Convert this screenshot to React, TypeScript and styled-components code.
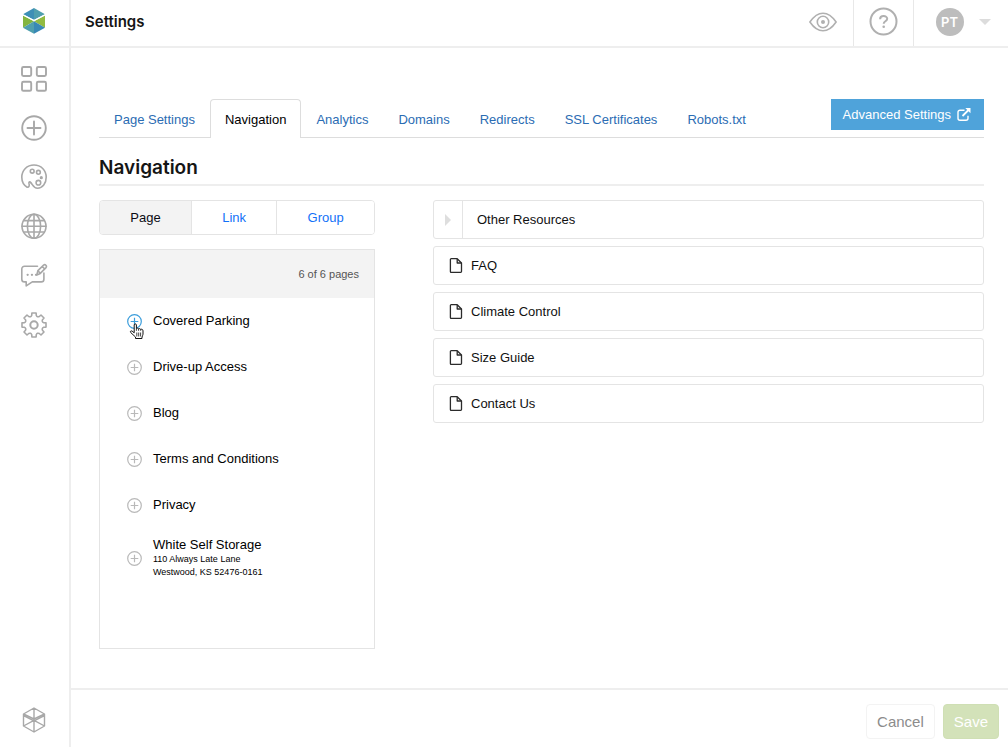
import React from "react";
import styled, { createGlobalStyle, css } from "styled-components";

const line = "#eeeeee";
const iconGrey = "#a8a8a8";
const display = 'Inter, "Open Sans", sans-serif';
const sans = '"Liberation Sans", Arial, Helvetica, sans-serif';

const GlobalStyle = createGlobalStyle`
  *, *::before, *::after { box-sizing: border-box; }
  body { margin: 0; background: #fff; color: #000; font: 13px/16px ${sans}; }
  button { font: inherit; color: inherit; background: none; border: 0; padding: 0; cursor: pointer; }
  a { text-decoration: none; }
  ul { list-style: none; margin: 0; padding: 0; }
  svg { display: block; }
`;

const Shell = styled.div`
  display: grid;
  grid-template-columns: 71px minmax(0, 1fr);
  min-height: 100vh;
`;

const Sidebar = styled.aside`
  display: flex;
  flex-direction: column;
  align-items: center;
  justify-content: space-between;
  border-right: 2px solid ${line};
  padding-bottom: 14px;
`;

const SideTop = styled.div`
  align-self: stretch;
  display: flex;
  flex-direction: column;
`;

const LogoLink = styled.a`
  display: flex;
  justify-content: center;
  height: 48px;
  padding-top: 8px;
  padding-right: 2px;
  border-bottom: 2px solid ${line};
`;

const SideNav = styled.nav`
  display: flex;
  flex-direction: column;
  align-items: center;
  gap: 21px;
  padding-top: 17px;
  padding-right: 1px;
`;

const SideLink = styled.a`
  display: block;
  color: ${iconGrey};
`;

const SideFoot = styled.div`
  padding-right: 2px;
`;

const Page = styled.div`
  display: flex;
  flex-direction: column;
  min-width: 0;
`;

const Header = styled.header`
  display: flex;
  align-items: stretch;
  height: 48px;
  border-bottom: 2px solid ${line};
`;

const Title = styled.h1`
  flex: 1;
  margin: 0;
  padding: 12px 14px 0;
  font: 600 15px/20px ${display};
  color: #151515;
`;

const HeaderCell = styled.div<{ $wide?: boolean }>`
  display: flex;
  align-items: center;
  justify-content: center;
  width: ${(p) => (p.$wide ? "95px" : "60px")};
  padding-bottom: 2px;
  color: #b0b0b0;
  & + & { border-left: 1px solid #e8e8e8; }
`;

const UserButton = styled.button`
  display: flex;
  align-items: center;
  gap: 15px;
  padding-left: 4px;
`;

const Avatar = styled.span`
  display: grid;
  place-items: center;
  width: 28px;
  height: 28px;
  border-radius: 50%;
  background: #bdbdbd;
  color: #fff;
  font: 600 13px/16px ${display};
`;

const Main = styled.main`
  flex: 1;
  padding: 51px 24px 39px 28px;
`;

const TabBar = styled.div`
  display: flex;
  justify-content: space-between;
  align-items: flex-start;
  height: 39px;
  border-bottom: 1px solid #ddd;
`;

const Tabs = styled.nav`
  display: flex;
`;

const Tab = styled.a<{ $active?: boolean }>`
  height: 39px;
  padding: 12px 14px 0;
  border: 1px solid transparent;
  border-bottom: 0;
  border-radius: 4px 4px 0 0;
  white-space: nowrap;
  color: #2b6cb3;
  ${(p) =>
    p.$active &&
    css`
      color: #000;
      background: #fff;
      border-color: #ddd;
    `}
`;

const AdvancedLink = styled.a`
  display: flex;
  align-items: center;
  gap: 6px;
  height: 31px;
  padding: 0 13px 0 12px;
  white-space: nowrap;
  background: #4fa3da;
  color: #fff;
`;

const SectionTitle = styled.h2`
  margin: 0;
  padding: 18px 0 4px;
  border-bottom: 2px solid ${line};
  font: 600 19px/24px ${display};
  color: #151515;
`;

const Columns = styled.div`
  display: grid;
  grid-template-columns: 276px minmax(0, 1fr);
  gap: 58px;
  align-items: start;
  padding-top: 14px;
`;

const Segments = styled.div`
  display: flex;
  height: 35px;
  margin-bottom: 14px;
  border: 1px solid #e4e4e4;
  border-radius: 4px;
  overflow: hidden;
`;

const Segment = styled.button<{ $active?: boolean }>`
  flex: 1 1 auto;
  color: ${(p) => (p.$active ? "#0b0b14" : "#1271f8")};
  background: ${(p) => (p.$active ? "#f3f3f3" : "#fff")};
  & + & { border-left: 1px solid #e4e4e4; }
`;

const Panel = styled.section`
  min-height: 400px;
  border: 1px solid #e4e4e4;
`;

const PanelHead = styled.div`
  display: flex;
  align-items: center;
  justify-content: flex-end;
  height: 48px;
  padding: 0 15px;
  background: #f3f3f3;
  color: #555;
  font-size: 11px;
`;

const PageRow = styled.li<{ $tall?: boolean }>`
  display: flex;
  align-items: center;
  gap: 11px;
  height: ${(p) => (p.$tall ? "60px" : "46px")};
  padding-left: 27px;
`;

const AddButton = styled.button<{ $hot?: boolean }>`
  position: relative;
  color: ${(p) => (p.$hot ? "#3b9ddb" : "#b9b9b9")};
`;

const Pointer = styled.svg`
  position: absolute;
  left: 2px;
  top: 9px;
`;

const Address = styled.span`
  display: block;
  font-size: 9px;
  line-height: 13px;
`;

const MenuList = styled.ul`
  display: grid;
  gap: 7px;
`;

const MenuItem = styled.li`
  display: flex;
  align-items: center;
  height: 39px;
  border: 1px solid #e4e4e4;
  border-radius: 3px;
  color: #111;
`;

const Expand = styled.button`
  display: grid;
  place-items: center;
  align-self: stretch;
  width: 29px;
  margin-right: 14px;
  border-right: 1px solid #e4e4e4;
  color: #dedede;
`;

const FileMark = styled.span`
  padding: 0 8px 0 15px;
`;

const Footer = styled.footer`
  display: flex;
  justify-content: flex-end;
  gap: 8px;
  height: 59px;
  padding: 14px 9px 0;
  border-top: 2px solid ${line};
`;

const FormButton = styled.button<{ $primary?: boolean }>`
  height: 35px;
  padding: 0 10px;
  border: 1px solid ${(p) => (p.$primary ? "#cfdfb4" : "#f3f3f3")};
  border-radius: 4px;
  background: ${(p) => (p.$primary ? "#d3e2b9" : "#fff")};
  color: ${(p) => (p.$primary ? "#fff" : "#8c8c8c")};
  font-size: 15px;
`;

const SideIcon = ({ children }: { children: React.ReactNode }) => (
  <svg width="28" height="28" viewBox="0 0 28 28" fill="none" stroke="currentColor" strokeWidth="1.6" strokeLinejoin="round" strokeLinecap="round" aria-hidden="true">
    {children}
  </svg>
);

const teeth = Array.from({ length: 8 }, (_, i) => {
  const at = (deg: number, r: number) => {
    const a = ((deg + i * 45 - 90) * Math.PI) / 180;
    return `${(14 + r * Math.cos(a)).toFixed(2)} ${(14 + r * Math.sin(a)).toFixed(2)}`;
  };
  return `${i ? "L" : "M"}${at(-10, 12.2)} L${at(10, 12.2)} L${at(13, 10)} Q${at(22.5, 8.2)} ${at(32, 10)}`;
}).join(" ");

const sideItems = [
  {
    label: "Dashboard",
    icon: (
      <g strokeWidth="1.9">
        <rect x="2" y="2" width="9.2" height="9" rx="1.4" />
        <rect x="16.8" y="2" width="9.2" height="9" rx="1.4" />
        <rect x="2" y="16.8" width="9.2" height="9" rx="1.4" />
        <rect x="16.8" y="16.8" width="9.2" height="9" rx="1.4" />
      </g>
    ),
  },
  {
    label: "Add",
    icon: (
      <g strokeWidth="1.9">
        <circle cx="14" cy="14" r="11.8" />
        <path d="M14 7.5v13M7.5 14h13" />
      </g>
    ),
  },
  {
    label: "Design",
    icon: (
      <>
        <path d="M7.2 24.2C3.5 22 1.8 18.3 1.8 14.2 1.8 7.3 7 2 14 2s12.2 5.3 12.2 12.2c0 6.2-3.7 11-8.7 11-4.5 0-4.8-4.3-7.4-6.200-.9-.5-1.400.4-1.100 1.500.6 2 .2 3.800-1.800 3.700z" />
        <circle cx="12.2" cy="8.2" r="1.9" />
        <circle cx="18.4" cy="9.3" r="1.9" />
        <circle cx="21.3" cy="14.7" r=".8" fill="currentColor" />
        <circle cx="18.4" cy="19.7" r="2.3" />
      </>
    ),
  },
  {
    label: "Sites",
    icon: (
      <>
        <circle cx="14" cy="14.3" r="12" />
        <ellipse cx="14" cy="14.3" rx="6.6" ry="12" />
        <path d="M14 2.3v24M2 14.3h24M4 8.600h20M4 20h20" />
      </>
    ),
  },
  {
    label: "Messages",
    icon: (
      <>
        <path d="M17.5 5.200H4.500a2.700 2.700 0 0 0-2.700 2.700v10.300a2.700 2.700 0 0 0 2.700 2.700h1.700v4l6.100-4h8.900a2.700 2.700 0 0 0 2.700-2.700v-6.200" />
        <path d="M16.800 13.900l1.100-4.300 5.700-5.500c1.600-1.200 3.700.8 2.400 2.500l-5.700 5.800zM17.900 9.600l2.400 2.800M22.200 5.500l2.500 2.500" />
        <path d="M7.600 13.800h.1M11.900 13.800h.1M16 13.800h.1" strokeWidth="2.200" />
      </>
    ),
  },
  {
    label: "Settings",
    icon: (
      <g transform="translate(0 1)">
        <path d={`${teeth} Z`} />
        <circle cx="14" cy="14" r="3.7" strokeWidth="2" />
      </g>
    ),
  },
];

const Logo = () => (
  <svg width="22" height="26" viewBox="0 0 22 26" role="img" aria-label="Home">
    <path d="M11 0v12L0 6.3z" fill="#3d8fb6" />
    <path d="M11 0v12l11-5.7z" fill="#4f9fae" />
    <path d="M0 7.600l11 5.600L0 19.700z" fill="#83b53f" />
    <path d="M22 7.600l-11 5.600 11 6.500z" fill="#92bb42" />
    <path d="M11 13.200v12.600L0 19.700z" fill="#4f9fae" />
    <path d="M11 13.200v12.600l11-6.100z" fill="#3989b5" />
    <path d="M0 6.800l11 5.700 11-5.700" fill="none" stroke="#fff" strokeWidth="1.200" />
  </svg>
);

const CubeOutline = () => (
  <svg width="24" height="26" viewBox="0 0 24 26" fill="none" stroke={iconGrey} strokeWidth="1.4" strokeLinejoin="round" aria-hidden="true">
    <path d="M12 1l10.500 6v12L12 25 1.500 19V7zM12 1v11.800M12 14v11M1.500 7L12 12l10.500-5M1.500 8.700L12 13.800l10.500-5.100M1.500 19L12 13.300 22.500 19" />
  </svg>
);

const Eye = () => (
  <svg width="28" height="20" viewBox="0 0 28 20" fill="none" stroke="currentColor" strokeWidth="1.6" aria-hidden="true">
    <path d="M.9 10C5 4 9 1.200 14 1.200S23 4 27.100 10C23 16 19 18.800 14 18.800S5 16 .9 10z" />
    <circle cx="14" cy="10" r="5.700" />
    <circle cx="14" cy="10" r="2" fill="currentColor" stroke="none" />
  </svg>
);

const Help = () => (
  <svg width="30" height="30" viewBox="0 0 30 30" fill="none" stroke="currentColor" strokeWidth="2" aria-hidden="true">
    <circle cx="14.500" cy="14.500" r="13" />
    <path d="M11.100 12.200c0-4.100 7.100-4 7.100-.4 0 2.500-3.500 2.400-3.500 4.900" />
    <circle cx="14.700" cy="19.800" r="1.300" fill="currentColor" stroke="none" />
  </svg>
);

const ExternalIcon = () => (
  <svg width="14" height="14" viewBox="0 0 14 14" fill="none" stroke="currentColor" strokeWidth="1.400" aria-hidden="true">
    <path d="M7.500 2.200H3A2 2 0 0 0 1 4.200v6a2 2 0 0 0 2 2h6a2 2 0 0 0 2-2V7.800" />
    <path d="M5.500 8l6-6" strokeWidth="1.800" />
    <path d="M8.300 0h5.200v5.200z" fill="currentColor" stroke="none" />
  </svg>
);

const PlusIcon = () => (
  <svg width="15" height="15" viewBox="0 0 15 15" fill="none" stroke="currentColor" strokeWidth="1.200" aria-hidden="true">
    <circle cx="7.500" cy="7.500" r="6.800" />
    <path d="M7.500 3.700v7.600M3.700 7.500h7.600" />
  </svg>
);

const FileIcon = () => (
  <svg width="14" height="16" viewBox="0 0 14 16" fill="none" stroke="#2b2b2b" strokeWidth="1.300" strokeLinejoin="round" aria-hidden="true">
    <path d="M2.200.7h6L12.500 5v8.600a.8.8 0 0 1-.8.8H2.200a.8.8 0 0 1-.8-.8V1.500a.8.8 0 0 1 .8-.8z" />
    <path d="M8.200.9V5h4.100" />
  </svg>
);

const HandCursor = () => (
  <Pointer width="16" height="17" viewBox="0 0 16 17" fill="#fff" stroke="#111" strokeLinejoin="round" aria-hidden="true">
    <path d="M5.200 9.800V2c0-1.500 2.200-1.500 2.200 0v3.600c.4-.8 2-.6 2.200.4.500-.7 1.900-.5 2.100.5.700-.6 2.300-.3 2.300 1.300v3.400c0 1-.8 1.900-1 2.800v1.500H6.500V14L1.700 9.500c-.9-1 .2-2.100 1.400-1.400z" />
    <path d="M7.800 9.500v4M9.700 9.500v4M11.600 9.500v4M7.400 5.600v2.200M9.600 6v1.800M11.700 6.500v1.300" strokeWidth=".8" />
  </Pointer>
);

const tabs = ["Page Settings", "Navigation", "Analytics", "Domains", "Redirects", "SSL Certificates", "Robots.txt"];
const pages = ["Covered Parking", "Drive-up Access", "Blog", "Terms and Conditions", "Privacy"];
const menu = ["FAQ", "Climate Control", "Size Guide", "Contact Us"];

export default function App() {
  return (
    <>
      <GlobalStyle />
      <Shell>
        <Sidebar>
          <SideTop>
            <LogoLink href="#home"><Logo /></LogoLink>
            <SideNav aria-label="Main">
              {sideItems.map((item) => (
                <SideLink key={item.label} href={`#${item.label.toLowerCase()}`} aria-label={item.label}>
                  <SideIcon>{item.icon}</SideIcon>
                </SideLink>
              ))}
            </SideNav>
          </SideTop>
          <SideFoot><CubeOutline /></SideFoot>
        </Sidebar>
        <Page>
          <Header>
            <Title>Settings</Title>
            <HeaderCell><button aria-label="Preview"><Eye /></button></HeaderCell>
            <HeaderCell><button aria-label="Help"><Help /></button></HeaderCell>
            <HeaderCell $wide>
              <UserButton aria-label="Account menu">
                <Avatar>PT</Avatar>
                <svg width="12" height="6" viewBox="0 0 12 6" aria-hidden="true"><path d="M0 0h12L6 6z" fill="#dcdcdc" /></svg>
              </UserButton>
            </HeaderCell>
          </Header>
          <Main>
            <TabBar>
              <Tabs aria-label="Settings sections">
                {tabs.map((t) => (
                  <Tab key={t} href="#section" $active={t === "Navigation"} aria-current={t === "Navigation" ? "page" : undefined}>{t}</Tab>
                ))}
              </Tabs>
              <AdvancedLink href="#advanced">Advanced Settings <ExternalIcon /></AdvancedLink>
            </TabBar>
            <SectionTitle>Navigation</SectionTitle>
            <Columns>
              <div>
                <Segments>
                  <Segment $active>Page</Segment>
                  <Segment>Link</Segment>
                  <Segment>Group</Segment>
                </Segments>
                <Panel>
                  <PanelHead>6 of 6 pages</PanelHead>
                  <ul>
                    {pages.map((name, i) => (
                      <PageRow key={name}>
                        <AddButton $hot={i === 0} aria-label={`Add ${name}`}>
                          <PlusIcon />
                          {i === 0 && <HandCursor />}
                        </AddButton>
                        <span>{name}</span>
                      </PageRow>
                    ))}
                    <PageRow $tall>
                      <AddButton aria-label="Add White Self Storage"><PlusIcon /></AddButton>
                      <div>
                        White Self Storage
                        <Address>110 Always Late Lane</Address>
                        <Address>Westwood, KS 52476-0161</Address>
                      </div>
                    </PageRow>
                  </ul>
                </Panel>
              </div>
              <MenuList>
                <MenuItem>
                  <Expand aria-label="Expand Other Resources">
                    <svg width="6" height="12" viewBox="0 0 6 12" aria-hidden="true"><path d="M0 0l6 6-6 6z" fill="currentColor" /></svg>
                  </Expand>
                  Other Resources
                </MenuItem>
                {menu.map((name) => (
                  <MenuItem key={name}>
                    <FileMark><FileIcon /></FileMark>
                    {name}
                  </MenuItem>
                ))}
              </MenuList>
            </Columns>
          </Main>
          <Footer>
            <FormButton>Cancel</FormButton>
            <FormButton $primary>Save</FormButton>
          </Footer>
        </Page>
      </Shell>
    </>
  );
}
